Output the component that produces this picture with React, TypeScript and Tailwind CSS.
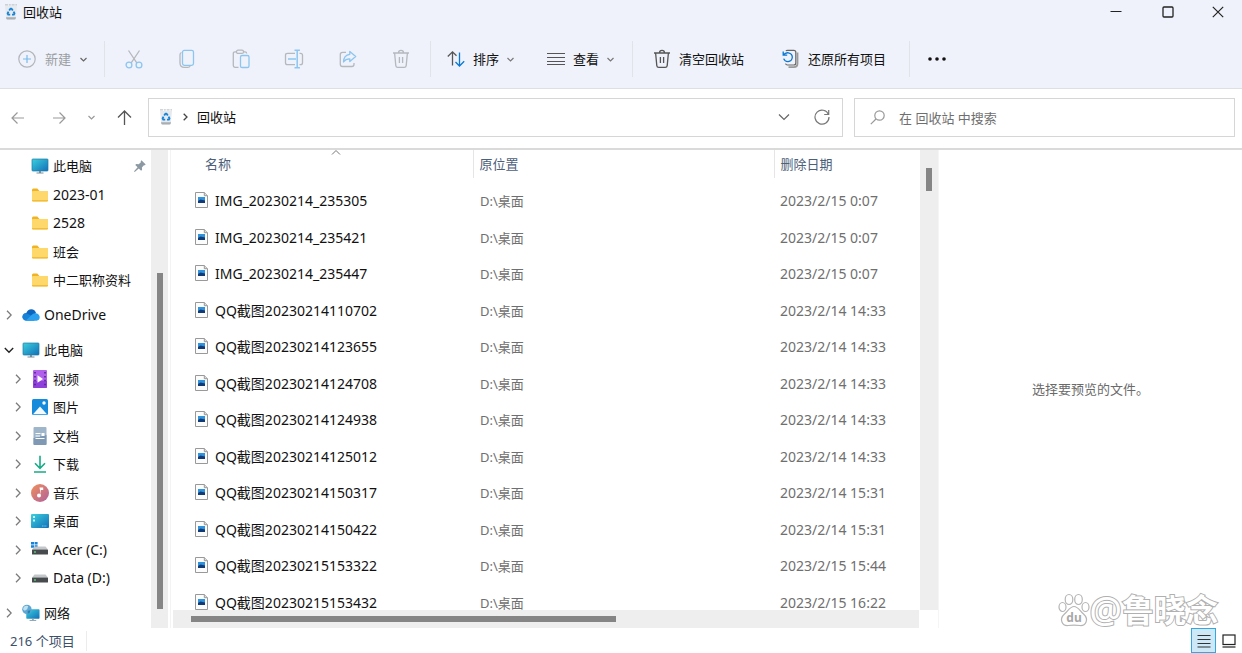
import React from 'react';

type IconProps = { className?: string };

const BinIcon = () => (
  <svg width="14" height="18" viewBox="0 0 14 18" aria-hidden="true">
    <path d="M1 3h12l-1.200 12.200q-.1 1.300-1.400 1.300H3.600q-1.300 0-1.400-1.300z" fill="#e6eaee" />
    <path d="M2 14.200h10l-.2 1.100q-.2 1.200-1.400 1.200H3.600q-1.200 0-1.400-1.200z" fill="#a9aeb3" />
    <path d="M1 1.800h12" stroke="#c3c8cd" strokeWidth="1.200" strokeDasharray="3 .8 2 .8" fill="none" />
    <g fill="none" stroke="#1583d8" strokeWidth="1.800" strokeLinejoin="round">
      <path d="M5.200 7.500L6.400 5.700h1.200L8.800 7.500" />
      <path d="M9.600 8.700l.9 1.800-.7 1.200H8" />
      <path d="M6.200 11.700H4.300l-.7-1.200.9-1.800" />
    </g>
  </svg>
);

const ChevronDown = ({ className = '' }: IconProps) => (
  <svg className={className} width="7" height="7" viewBox="0 0 7 7" fill="none" stroke="currentColor" strokeWidth="1.200" aria-hidden="true">
    <path d="M.5 2l3 3 3-3" />
  </svg>
);

const ChevronBig = () => (
  <svg width="12" height="12" viewBox="0 0 12 12" fill="none" stroke="currentColor" strokeWidth="1.200" aria-hidden="true">
    <path d="M1 3.500l5 5 5-5" />
  </svg>
);

const ChevronRight = () => (
  <svg width="6" height="10" viewBox="0 0 6 10" fill="none" stroke="#7a7a7a" strokeWidth="1.300" aria-hidden="true">
    <path d="M1 .8L5.200 5 1 9.200" />
  </svg>
);

const TrashIcon = () => (
  <svg width="18" height="20" viewBox="0 0 18 20" fill="none" stroke="currentColor" strokeWidth="1.300" aria-hidden="true">
    <path d="M1 4h16M6.500 4q0-2.600 2.500-2.600T11.500 4M2.600 4l1.200 12.600q.2 1.800 2 1.800h6.400q1.800 0 2-1.800L15.400 4M7.400 8v6M10.600 8v6" />
  </svg>
);

// cut, copy, paste, rename, share, delete
const editActions = [
  {
    label: '剪切',
    icon: (
      <svg width="18" height="20" viewBox="0 0 18 20" fill="none" strokeWidth="1.300">
        <path d="M3.500 1.500l8.300 12.300M14.500 1.500L6.200 13.800" stroke="#b5b8bd" />
        <circle cx="4" cy="16" r="2.900" stroke="#8cc5f0" />
        <circle cx="14" cy="16" r="2.900" stroke="#8cc5f0" />
      </svg>
    ),
  },
  {
    label: '复制',
    icon: (
      <svg width="18" height="20" viewBox="0 0 18 20" fill="none" strokeWidth="1.300">
        <path d="M3.500 3.500Q2 4 2 5.800V14q0 4.400 4.400 4.400h3.400q1.700 0 2.400-1.400" stroke="#b5b8bd" />
        <rect x="4.500" y="1.400" width="11" height="15" rx="1.800" stroke="#8cc5f0" />
      </svg>
    ),
  },
  {
    label: '粘贴',
    icon: (
      <svg width="18" height="20" viewBox="0 0 18 20" fill="none" strokeWidth="1.300">
        <path d="M4.500 2.800H3q-1.700 0-1.700 1.700v12Q1.300 18.300 3 18.300h3.500M11.500 2.800H13q1.600 0 1.700 1.700" stroke="#b5b8bd" />
        <rect x="4.500" y="1.200" width="7" height="3.200" rx="1.500" stroke="#b5b8bd" />
        <rect x="8.500" y="6.500" width="8.500" height="12" rx="1.600" stroke="#8cc5f0" />
      </svg>
    ),
  },
  {
    label: '重命名',
    icon: (
      <svg width="20" height="20" viewBox="0 0 20 20" fill="none" strokeWidth="1.300">
        <path d="M11 4.300H3.500q-2 0-2 2v7.400q0 2 2 2H11M15.500 4.300h1q2 0 2 2v7.400q0 2-2 2h-1" stroke="#b5b8bd" />
        <path d="M4 10h8M13.200 1.500v17M10.500 1.300h5.400M10.500 18.700h5.400" stroke="#8cc5f0" strokeWidth="1.500" />
      </svg>
    ),
  },
  {
    label: '共享',
    icon: (
      <svg width="18" height="20" viewBox="0 0 18 20" fill="none" strokeWidth="1.300">
        <path d="M7 3.300H3.500q-2.200 0-2.200 2.200v9.800q0 2.200 2.200 2.200h9.300q2.200 0 2.200-2.200V14" stroke="#b5b8bd" />
        <path d="M10.800 2.500l5.900 5-5.900 5V9.800q-4-.2-6.300 3.200.2-7 6.300-7.700z" stroke="#8cc5f0" strokeLinejoin="round" />
      </svg>
    ),
  },
  { label: '删除', icon: <TrashIcon /> },
];

const SortIcon = () => (
  <svg width="18" height="18" viewBox="0 0 18 18" fill="none" strokeWidth="1.300" aria-hidden="true">
    <path d="M5.500 15.500V2M.8 6.500L5.500 1.800l4 4" stroke="#555" />
    <path d="M12.500 2.500V16M8.500 12l4 4 4.700-4.700" stroke="#0a78d4" />
  </svg>
);

const LinesIcon = () => (
  <svg width="18" height="18" viewBox="0 0 18 18" stroke="#555" aria-hidden="true">
    <path d="M0 3.500h18M0 7.500h18M0 11.500h18M0 14.500h18" />
  </svg>
);

const RestoreIcon = () => (
  <svg width="18" height="20" viewBox="0 0 18 20" fill="none" strokeWidth="1.200" aria-hidden="true">
    <path d="M4 2Q4.300 1.300 5.500 1.300h6.300q2 0 2 2V14q0 2-2 2H5.500Q4 16 3.500 14.600" stroke="#666" />
    <path d="M15.500 3.500v11q0 3.600-3.700 3.600H6.500" stroke="#999" strokeWidth="1.800" />
    <path d="M1.200 2.500v3.700h4M1.400 6q2-2.600 5-2.200 4 .8 3.900 4.500-.3 4-4.300 4.300-3.300 0-4.300-3" stroke="#0a78d4" strokeWidth="1.300" />
  </svg>
);

const MonitorIcon = () => (
  <svg width="18" height="16" viewBox="0 0 18 16" aria-hidden="true">
    <defs>
      <linearGradient id="screen" x1="0" y1="0" x2="1" y2="1">
        <stop offset="0" stopColor="#3ad0dd" />
        <stop offset="1" stopColor="#1270b8" />
      </linearGradient>
    </defs>
    <rect x="1" y="1" width="16" height="12" rx=".8" fill="url(#screen)" stroke="#1c79a6" strokeWidth=".7" />
    <path d="M8 13h2v1.500h2.500v1h-7v-1H8z" fill="#768c99" />
  </svg>
);

const FolderIcon = () => (
  <svg width="18" height="16" viewBox="0 0 18 16" aria-hidden="true">
    <path d="M1 3q0-1.500 1.300-1.500h4L8.500 4h8v6H1z" fill="#f0b323" />
    <rect x="1" y="4" width="16" height="10.500" rx="1" fill="#ffd86b" />
    <path d="M1 13h16v.5q0 1-1 1H2q-1 0-1-1z" fill="#f2bc3c" />
  </svg>
);

const CloudIcon = () => (
  <svg width="19" height="14" viewBox="0 0 19 14" aria-hidden="true">
    <path d="M4.500 5Q6 1 9.800 1q4 0 5 4L10 9.500 2 12Q0 10.500.5 8 1.300 5.300 4.500 5z" fill="#0c66c0" />
    <path d="M2 12Q0 10 .7 7.800 2 4.700 5.300 5.300l9.500 5-2 2.700H4q-1.200 0-2-1z" fill="#1683d8" />
    <path d="M9.500 7.600Q12 4.800 14.800 5.200q3.800 1 3.900 4.300-.2 3.300-3.200 3.500H4z" fill="#2ba0ef" />
  </svg>
);

const VideoIcon = () => (
  <svg width="18" height="18" viewBox="0 0 18 18" aria-hidden="true">
    <rect x="2" y="0" width="14" height="18" rx="1" fill="#b060ea" />
    <path d="M2 11h14v6q0 1-1 1H3q-1 0-1-1z" fill="#9040da" />
    <path d="M4 2v14M14 2v14" stroke="#4b2086" strokeWidth="1.500" strokeDasharray="1.500 2.400" />
    <path d="M6.500 5.200v7.600L12 9z" fill="#fff" />
  </svg>
);

const PictureIcon = () => (
  <svg width="18" height="18" viewBox="0 0 18 18" aria-hidden="true">
    <rect x="1" y="1" width="16" height="16" rx="1.500" fill="#168bdc" />
    <path d="M2 16.300L9 8.500l7 7.800z" fill="#f4fbff" />
    <circle cx="13" cy="5" r="1.700" fill="#fff" />
  </svg>
);

const DocIcon = () => (
  <svg width="18" height="18" viewBox="0 0 18 18" aria-hidden="true">
    <rect x="2.500" y="0" width="13" height="18" rx="1" fill="#9fb5ca" />
    <path d="M2.500 11L15.500 8v9q0 1-1 1h-11q-1 0-1-1z" fill="#7f99b5" />
    <path d="M4.500 6.500h5M4.500 9h4.500M4.500 11.500h9" stroke="#fff" strokeWidth="1.200" />
    <rect x="10.500" y="6" width="3" height="3" fill="#fff" />
  </svg>
);

const DownloadIcon = () => (
  <svg width="18" height="18" viewBox="0 0 18 18" fill="none" stroke="#17ab86" strokeWidth="1.600" aria-hidden="true">
    <path d="M9 .8V13M4 8.300l5 5 5-5M3 17h12" />
  </svg>
);

const MusicIcon = () => (
  <svg width="18" height="18" viewBox="0 0 18 18" aria-hidden="true">
    <defs>
      <linearGradient id="disc" x1="0" y1="0" x2="1" y2="1">
        <stop offset="0" stopColor="#f0905a" />
        <stop offset="1" stopColor="#b0609f" />
      </linearGradient>
    </defs>
    <circle cx="9" cy="9" r="9" fill="url(#disc)" />
    <path d="M8.500 3.500h3.700v2.600H9.800v5.200z" fill="#fff" />
    <circle cx="8" cy="11.500" r="2" fill="#fff" />
  </svg>
);

const DesktopIcon = () => (
  <svg width="18" height="16" viewBox="0 0 18 16" aria-hidden="true">
    <rect x="0" y="1" width="18" height="14" rx="1" fill="url(#screen)" />
    <path d="M2 3h2v2H2zM2 6.500h2v2H2z" fill="#c5f4fb" />
    <path d="M11 13h5" stroke="#7fc4ea" strokeDasharray="1.500 .8" />
  </svg>
);

const DriveIcon = ({ system = false }: { system?: boolean }) => (
  <svg width="18" height="16" viewBox="0 0 18 16" aria-hidden="true">
    {system && <path d="M0 0h3v2.600H0zM3.600 0h3v2.600h-3zM0 3.200h3v2.600H0zM3.600 3.200h3v2.600h-3z" fill="#1683d8" />}
    <path d="M3.500 4.500h11L17 7.500H1z" fill="#c4c7c9" />
    <rect x="1" y="7.500" width="16" height="5" rx=".6" fill="#474b4e" />
    <circle cx="4" cy="10" r=".9" fill="#55d676" />
  </svg>
);

const NetworkIcon = () => (
  <svg width="19" height="18" viewBox="0 0 19 18" aria-hidden="true">
    <rect x="4.500" y="5" width="14" height="10" rx=".8" fill="url(#screen)" />
    <path d="M10.500 15h2v1.500h2.500v1H8v-1h2.500z" fill="#9aa7b0" />
    <circle cx="5.200" cy="5.200" r="5" fill="#5fa7d2" />
    <path d="M2 2.500q3-2 4.500-.5L5.500 5 3 6.500 1 5z" fill="#bfe2f3" />
    <path d="M6 6.500l3-.5-1 3-2 .7z" fill="#2c7fae" />
  </svg>
);

const FileIcon = () => (
  <svg className="shrink-0" width="13" height="18" viewBox="0 0 13 18" aria-hidden="true">
    <path d="M.5.5h8.800l3.200 3.200v11.800H.5z" fill="#fcfcfc" stroke="#999" />
    <path d="M9.300.5v3.200h3.200" fill="#ddd" stroke="#999" />
    <rect x="3" y="5" width="7" height="6" fill="#2f93dc" />
    <path d="M3 9l2.500-1.500L10 8.500V11H3z" fill="#123a77" />
  </svg>
);

const pinned = [
  { name: '此电脑', icon: <MonitorIcon />, pin: true },
  { name: '2023-01', icon: <FolderIcon />, latin: true },
  { name: '2528', icon: <FolderIcon />, latin: true },
  { name: '班会', icon: <FolderIcon /> },
  { name: '中二职称资料', icon: <FolderIcon /> },
];

const computer = [
  { name: '视频', icon: <VideoIcon /> },
  { name: '图片', icon: <PictureIcon /> },
  { name: '文档', icon: <DocIcon /> },
  { name: '下载', icon: <DownloadIcon /> },
  { name: '音乐', icon: <MusicIcon /> },
  { name: '桌面', icon: <DesktopIcon /> },
  { name: 'Acer (C:)', icon: <DriveIcon system />, latin: true },
  { name: 'Data (D:)', icon: <DriveIcon />, latin: true },
];

const files = [
  ['IMG_20230214_235305', '2023/2/15 0:07'],
  ['IMG_20230214_235421', '2023/2/15 0:07'],
  ['IMG_20230214_235447', '2023/2/15 0:07'],
  ['QQ截图20230214110702', '2023/2/14 14:33'],
  ['QQ截图20230214123655', '2023/2/14 14:33'],
  ['QQ截图20230214124708', '2023/2/14 14:33'],
  ['QQ截图20230214124938', '2023/2/14 14:33'],
  ['QQ截图20230214125012', '2023/2/14 14:33'],
  ['QQ截图20230214150317', '2023/2/14 15:31'],
  ['QQ截图20230214150422', '2023/2/14 15:31'],
  ['QQ截图20230215153322', '2023/2/15 15:44'],
  ['QQ截图20230215153432', '2023/2/15 16:22'],
];

type NavItemProps = {
  name: string;
  icon: React.ReactNode;
  latin?: boolean;
  root?: boolean;
  open?: boolean;
  leaf?: boolean;
  pin?: boolean;
};

const NavItem = ({ name, icon, latin, root, open, leaf, pin }: NavItemProps) => (
  <li className="odd:h-7 even:h-[29px]">
    <button type="button" className={`flex h-full w-full items-center ${root ? 'pl-1' : 'pl-[13px]'}`}>
      <span className="flex w-[10px] justify-center">
        {open ? (
          <svg width="10" height="10" viewBox="0 0 10 10" fill="none" stroke="#222" strokeWidth="1.400">
            <path d="M.8 3L5 7.200 9.200 3" />
          </svg>
        ) : (
          !leaf && <ChevronRight />
        )}
      </span>
      <span className="ml-2 flex w-[18px] shrink-0 justify-center">{icon}</span>
      <span className={`ml-1 whitespace-nowrap ${latin ? 'text-sm' : 'text-[13px]'}`}>{name}</span>
      {pin && (
        <svg className="mr-[5px] ml-auto" width="12" height="12" viewBox="0 0 12 12" aria-hidden="true">
          <path d="M7.500.3l4.200 4.200-1 .8-.8-.1-2 2.200.2 2.400-1 .9-2.300-2.300L1 11.800l-.8.1.1-.8 3.300-3.800L1.300 5l.9-1 2.500.2 2.200-2-.2-.9z" fill="#8c98a2" />
        </svg>
      )}
    </button>
  </li>
);

const Divider = () => <div className="h-9 w-px shrink-0 bg-[#e0e3e8]" />;

const App = () => {
  return (
    <div className="flex h-screen flex-col overflow-hidden bg-white font-['Noto_Sans','Noto_Sans_CJK_SC',sans-serif] text-[13px] leading-5 text-[#111]">
      <header className="border-b border-[#dddfe3] bg-[#eff2fa]">
        <div className="flex h-6 items-center pl-1">
          <BinIcon />
          <h1 className="ml-[5px]">回收站</h1>
          <div className="ml-auto flex items-center text-[#222]">
            <button type="button" aria-label="最小化" className="flex w-[52px] justify-center">
              <svg width="12" height="12" viewBox="0 0 12 12" stroke="currentColor"><path d="M.5 5.500h11" /></svg>
            </button>
            <button type="button" aria-label="最大化" className="flex w-[52px] justify-center">
              <svg width="12" height="12" viewBox="0 0 12 12" fill="none" stroke="currentColor" strokeWidth="1.300"><rect x="1" y="1" width="10" height="10" rx="1" /></svg>
            </button>
            <button type="button" aria-label="关闭" className="flex w-12 justify-center">
              <svg width="12" height="12" viewBox="0 0 12 12" stroke="currentColor" strokeWidth="1.200"><path d="M.8.8l10.400 10.400M11.200.8L.8 11.200" /></svg>
            </button>
          </div>
        </div>

        <div className="mt-[6px] flex h-[58px] items-center">
          <button type="button" disabled className="flex items-center gap-[9px] pr-[17px] pl-[18px] text-[#9b9ea3]">
            <svg width="18" height="18" viewBox="0 0 18 18" fill="none" strokeWidth="1.200">
              <circle cx="9" cy="9" r="8.200" stroke="#b2b5ba" />
              <path d="M9 5v8M5 9h8" stroke="#79b9ec" />
            </svg>
            新建
            <ChevronDown className="text-[#666]" />
          </button>
          <Divider />
          <div className="grid w-[325px] shrink-0 grid-cols-6 px-[2px] text-[#b5b8bd]">
            {editActions.map(a => (
              <button key={a.label} type="button" disabled aria-label={a.label} className="flex justify-center">
                {a.icon}
              </button>
            ))}
          </div>
          <Divider />
          <button type="button" className="flex items-center gap-2 pr-[17px] pl-4">
            <SortIcon />
            排序
            <ChevronDown className="text-[#777]" />
          </button>
          <button type="button" className="flex items-center gap-2 pr-[18px] pl-4">
            <LinesIcon />
            查看
            <ChevronDown className="text-[#777]" />
          </button>
          <Divider />
          <button type="button" className="flex items-center gap-2 px-5">
            <span className="text-[#555]"><TrashIcon /></span>
            清空回收站
          </button>
          <button type="button" className="flex items-center gap-2 pr-[23px] pl-[18px]">
            <RestoreIcon />
            还原所有项目
          </button>
          <Divider />
          <button type="button" aria-label="更多" className="px-[18px]">
            <svg width="18" height="4" viewBox="0 0 18 4" fill="#111"><circle cx="2" cy="2" r="1.800" /><circle cx="9" cy="2" r="1.800" /><circle cx="16" cy="2" r="1.800" /></svg>
          </button>
        </div>
      </header>

      <div className="flex items-center border-b-2 border-[#dadada] pt-[9px] pr-[7px] pb-[11px]">
        <nav className="flex w-[148px] shrink-0 items-center pl-[11px] text-[#999]">
          <button type="button" aria-label="后退">
            <svg width="14" height="14" viewBox="0 0 14 14" fill="none" stroke="currentColor" strokeWidth="1.200"><path d="M13 7H1M6.500 1.500L1 7l5.500 5.500" /></svg>
          </button>
          <button type="button" aria-label="前进" className="ml-[27px]">
            <svg width="14" height="14" viewBox="0 0 14 14" fill="none" stroke="currentColor" strokeWidth="1.200"><path d="M1 7H13M7.500 1.500L13 7l-5.500 5.500" /></svg>
          </button>
          <button type="button" aria-label="最近浏览的位置" className="ml-[22px]"><ChevronDown /></button>
          <button type="button" aria-label="上移" className="ml-[22px] text-[#555]">
            <svg width="15" height="15" viewBox="0 0 15 15" fill="none" stroke="currentColor" strokeWidth="1.300"><path d="M7.500 15V1M1 7.500L7.500 1 14 7.500" /></svg>
          </button>
        </nav>
        <div className="flex h-[39px] flex-1 items-center border border-[#d6d6d6] pr-3 pb-[2px] pl-[10px]">
          <BinIcon />
          <span className="mx-[9px] flex w-[6px] justify-center">
            <svg width="5" height="8" viewBox="0 0 5 8" fill="none" stroke="#444" strokeWidth="1.300"><path d="M.7.700L4 4 .7 7.300" /></svg>
          </span>
          <button type="button">回收站</button>
          <button type="button" aria-label="以前的位置" className="ml-auto text-[#666]"><ChevronBig /></button>
          <button type="button" aria-label="刷新" className="ml-6 text-[#777]">
            <svg width="16" height="16" viewBox="0 0 16 16" fill="none" stroke="currentColor" strokeWidth="1.200"><path d="M14.500 5.500A7 7 0 1 0 15 8M14.700 1v4.500h-4.500" /></svg>
          </button>
        </div>
        <label className="ml-[11px] flex h-[39px] w-[381px] items-center border border-[#d6d6d6] pl-[15px]">
          <svg width="15" height="15" viewBox="0 0 15 15" fill="none" stroke="#999" strokeWidth="1.200" aria-hidden="true"><circle cx="9.500" cy="5.500" r="4.700" /><path d="M6 9L.8 14.200" /></svg>
          <input type="text" aria-label="搜索" placeholder="在 回收站 中搜索" className="ml-[14px] min-w-0 flex-1 outline-none placeholder:text-[#6f6f6f]" />
        </label>
      </div>

      <main className="flex min-h-0 flex-1">
        <aside className="flex w-[168px] shrink-0">
          <div className="min-w-0 flex-1 space-y-[7px] overflow-hidden pt-[2px]">
            <ul>
              {pinned.map(p => <NavItem key={p.name} {...p} leaf />)}
            </ul>
            <ul>
              <NavItem name="OneDrive" icon={<CloudIcon />} root latin />
            </ul>
            <ul>
              <NavItem name="此电脑" icon={<MonitorIcon />} root open />
              {computer.map(c => <NavItem key={c.name} {...c} />)}
            </ul>
            <ul>
              <NavItem name="网络" icon={<NetworkIcon />} root />
            </ul>
          </div>
          <div className="flex w-[17px] flex-col items-center bg-[#eee] pt-[123px] pb-[19px]">
            <div className="w-[6px] flex-1 bg-[#858585]" />
          </div>
        </aside>

        <section className="ml-[2px] flex min-w-0 flex-1 flex-col border-l border-[#f3f3f3] pl-[2px]">
          <div className="flex min-h-0 flex-1">
            <div className="min-w-0 flex-1 overflow-hidden">
              <table className="w-full table-fixed text-left">
                <thead className="text-[#4c607a]">
                  <tr className="h-7">
                    <th scope="col" className="relative w-[300px] border-r border-[#e5e5e5] pl-8 font-normal">
                      名称
                      <svg className="absolute top-0 left-[158px]" width="10" height="5" viewBox="0 0 10 5" fill="none" stroke="#777"><path d="M1 4.500l4-4 4 4" /></svg>
                    </th>
                    <th scope="col" className="w-[301px] border-r border-[#e5e5e5] pl-[6px] font-normal">原位置</th>
                    <th scope="col" className="pl-[6px] font-normal">删除日期</th>
                  </tr>
                </thead>
                <tbody className="text-[#6f6f6f] before:block before:h-[5px]">
                  {files.map(([name, date]) => (
                    <tr key={name} className="odd:h-9 even:h-[37px]">
                      <td className="pl-[22px]">
                        <div className="flex items-center gap-[7px] text-sm text-[#111]">
                          <FileIcon />
                          {name}
                        </div>
                      </td>
                      <td className="pl-[7px]">D:\桌面</td>
                      <td className="pl-[6px] text-sm">{date}</td>
                    </tr>
                  ))}
                </tbody>
              </table>
            </div>
            <div className="flex w-[18px] justify-center bg-[#eee] pt-[18px]">
              <div className="h-[23px] w-[6px] bg-[#858585]" />
            </div>
          </div>
          <div className="mr-[19px] flex h-[18px] items-center bg-[#eee] pl-[18px]">
            <div className="h-[6px] w-[425px] bg-[#858585]" />
          </div>
        </section>

        <aside className="relative flex w-[304px] shrink-0 items-center justify-center border-l border-[#f5f5f5] text-[#6a6a6a]">
          <p>选择要预览的文件。</p>
          <div className="absolute right-6 bottom-0 flex items-center">
            <svg width="32" height="34" viewBox="0 0 32 34" fill="#fff" stroke="#b5b5b5" strokeWidth="1.200" aria-hidden="true">
              <ellipse cx="11" cy="6.500" rx="3.800" ry="5" />
              <ellipse cx="20.500" cy="6.500" rx="3.800" ry="5" />
              <ellipse cx="4.500" cy="14" rx="3.500" ry="4.500" />
              <ellipse cx="27.500" cy="14" rx="3.500" ry="4.500" />
              <path d="M16 13.500c4 0 6 4.500 9.500 7.500 6 5.500 2 12-3.500 11.500-4-.6-8-.6-12 0-5.500.5-9.500-6-3.500-11.500 3.500-3 5.500-7.500 9.500-7.500z" />
              <text x="16" y="28.500" textAnchor="middle" fontSize="12" fontWeight="700" fill="#a8a8a8" stroke="none">du</text>
            </svg>
            <span className="flex items-center text-[32px] leading-9 font-bold text-white [paint-order:stroke_fill] [-webkit-text-stroke:2px_#b0b0b0]">
              <span className="text-4xl leading-9 font-medium">@</span>
              鲁晓念
            </span>
          </div>
        </aside>
      </main>

      <footer className="flex h-[25px] shrink-0 items-center pl-[10px] text-[#3b5069]">
        <span className="border-r border-[#ececec] pr-[11px]">216 个项目</span>
        <div className="ml-auto flex items-center">
          <button type="button" aria-label="详细信息" className="flex h-[25px] w-[25px] items-center justify-center border border-[#35a6de] bg-[#cde8f6]">
            <svg width="14" height="14" viewBox="0 0 14 14" stroke="#333" strokeWidth="1.200"><path d="M.5 1.500h13M.5 5.500h13M.5 9.500h13M.5 13h13" /></svg>
          </button>
          <button type="button" aria-label="大图标" className="flex w-[26px] justify-center">
            <svg width="14" height="14" viewBox="0 0 14 14" fill="none" stroke="#222" strokeWidth="1.200"><rect x="1" y="1" width="12" height="9.500" /><path d="M.5 13h13" /></svg>
          </button>
        </div>
      </footer>
    </div>
  );
};

export default App;
